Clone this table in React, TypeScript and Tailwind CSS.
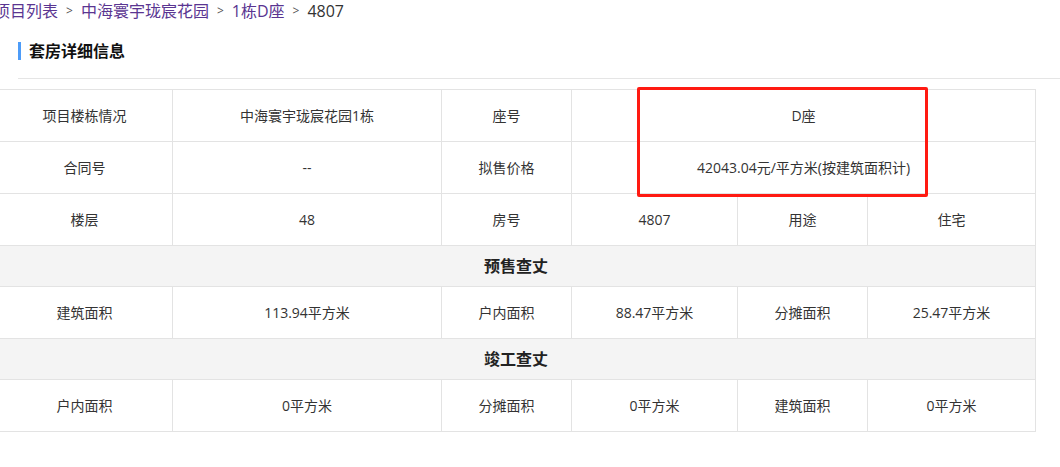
const font = { fontFamily: '"Open Sans", "Noto Sans CJK SC", sans-serif' };

type Cell = { text: string; span?: number };

const topRows: Cell[][] = [
  [{ text: "项目楼栋情况" }, { text: "中海寰宇珑宸花园1栋" }, { text: "座号" }, { text: "D座", span: 3 }],
  [{ text: "合同号" }, { text: "--" }, { text: "拟售价格" }, { text: "42043.04元/平方米(按建筑面积计)", span: 3 }],
  [{ text: "楼层" }, { text: "48" }, { text: "房号" }, { text: "4807" }, { text: "用途" }, { text: "住宅" }],
];

const presale: Cell[] = [
  { text: "建筑面积" },
  { text: "113.94平方米" },
  { text: "户内面积" },
  { text: "88.47平方米" },
  { text: "分摊面积" },
  { text: "25.47平方米" },
];

const completed: Cell[] = [
  { text: "户内面积" },
  { text: "0平方米" },
  { text: "分摊面积" },
  { text: "0平方米" },
  { text: "建筑面积" },
  { text: "0平方米" },
];

function DataRow({ cells }: { cells: Cell[] }) {
  return (
    <tr className="h-[52px]">
      {cells.map((c, i) => (
        <td
          key={i}
          colSpan={c.span}
          className="border border-[#e3e3e3] text-center text-[14px] text-[#333] align-middle p-0"
        >
          {c.text}
        </td>
      ))}
    </tr>
  );
}

function SectionRow({ title }: { title: string }) {
  return (
    <tr className="h-[41px] bg-[#f4f4f4]">
      <td colSpan={6} className="border border-[#e3e3e3] text-center text-[16px] font-bold text-[#222] p-0">
        {title}
      </td>
    </tr>
  );
}

export default function App() {
  return (
    <div className="relative w-[1060px] h-[467px] overflow-hidden bg-white" style={font}>
      <div className="ml-[-6px]">
        {/* breadcrumb */}
        <div className="flex items-center h-[22px] text-[16px] leading-[22px] whitespace-nowrap">
          <a className="text-[#5a3591]">项目列表</a>
          <span className="mx-[8px] text-[12px] text-[#555]">&gt;</span>
          <a className="text-[#5a3591]">中海寰宇珑宸花园</a>
          <span className="mx-[8px] text-[12px] text-[#555]">&gt;</span>
          <a className="text-[#5a3591]">1栋D座</a>
          <span className="mx-[8px] text-[12px] text-[#555]">&gt;</span>
          <span className="text-[#333]">4807</span>
        </div>

        {/* heading */}
        <div className="ml-[24px] mt-[10px] h-[47px] pt-[10px] border-b border-[#e5e5e5]">
          <div className="flex items-center">
            <span className="w-[3px] h-[18px] bg-[#4d9cf8]" />
            <h2 className="ml-[8px] text-[16px] leading-[18px] font-bold text-[#111]">套房详细信息</h2>
          </div>
        </div>

        {/* table */}
        <table className="ml-[2px] mt-[10px] w-[1039px] table-fixed border-collapse">
          <colgroup>
            <col className="w-[176px]" />
            <col className="w-[269px]" />
            <col className="w-[130px]" />
            <col className="w-[166px]" />
            <col className="w-[130px]" />
            <col className="w-[168px]" />
          </colgroup>
          <tbody>
            {topRows.map((r, i) => (
              <DataRow key={i} cells={r} />
            ))}
            <SectionRow title="预售查丈" />
            <DataRow cells={presale} />
            <SectionRow title="竣工查丈" />
            <DataRow cells={completed} />
          </tbody>
        </table>
      </div>

      {/* annotation box */}
      <div className="absolute left-[637px] top-[87px] w-[291px] h-[110px] border-[3px] border-[#ff1a12] rounded-[2px]" />
    </div>
  );
}
